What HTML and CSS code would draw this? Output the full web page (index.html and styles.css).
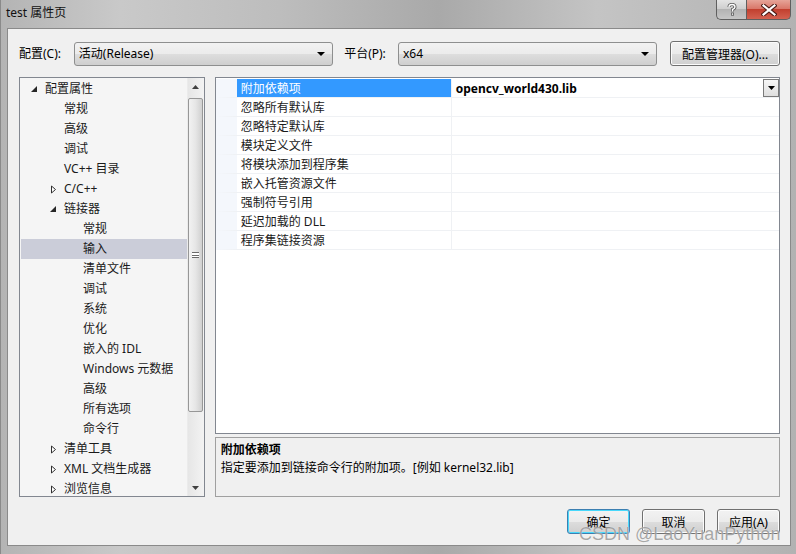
FILE: index.html
```html
<!DOCTYPE html>
<html lang="zh-CN">
<head>
    <meta charset="UTF-8">
    <title>test 属性页</title>
    <link rel="stylesheet" href="styles.css">
</head>
<body>
    <div class="window">
        <div class="titlebar">
            <span class="title">test 属性页</span>
            <div class="caption">
                <div class="cap help">
                    <svg width="10" height="13" viewBox="0 0 10 13">
                        <path d="M2 4 Q2 1.5 5 1.5 Q8 1.5 8 4 Q8 5.5 5.5 6.5 L5.5 8.5" fill="none" stroke="#555" stroke-width="3"/>
                        <path d="M2 4 Q2 1.5 5 1.5 Q8 1.5 8 4 Q8 5.5 5.5 6.5 L5.5 8.5" fill="none" stroke="#fff" stroke-width="1.4"/>
                        <rect x="4" y="9.6" width="3" height="3" fill="#555"/>
                        <rect x="4.8" y="10.4" width="1.4" height="1.4" fill="#fff"/>
                    </svg>
                </div>
                <div class="cap close">
                    <svg width="16" height="12" viewBox="0 0 16 12">
                        <path d="M2.5 1.5 L13.5 10.5 M13.5 1.5 L2.5 10.5" stroke="#4a1a14" stroke-width="4.2" stroke-linecap="square"/>
                        <path d="M2.5 1.5 L13.5 10.5 M13.5 1.5 L2.5 10.5" stroke="#fff" stroke-width="2.2" stroke-linecap="square"/>
                    </svg>
                </div>
            </div>
        </div>

        <div class="client">
            <div class="toolbar">
                <span class="label first">配置(C):</span>
                <div class="combo">活动(Release)<span class="combo-arrow"></span></div>
                <span class="label second">平台(P):</span>
                <div class="combo">x64<span class="combo-arrow"></span></div>
                <button class="btn manager">配置管理器(O)...</button>
            </div>

            <div class="main">
                <div class="tree">
                    <div class="tree-list">
                        <div class="node lv0"><span class="tog"><svg width="8" height="8" viewBox="0 0 8 8"><polygon points="7,1 7,7 1,7" fill="#262626"/></svg></span>配置属性</div>
                        <div class="node lv1"><span class="tog"></span>常规</div>
                        <div class="node lv1"><span class="tog"></span>高级</div>
                        <div class="node lv1"><span class="tog"></span>调试</div>
                        <div class="node lv1"><span class="tog"></span>VC++ 目录</div>
                        <div class="node lv1"><span class="tog"><svg width="8" height="9" viewBox="0 0 8 9"><polygon points="2.5,1 6.5,4.5 2.5,8" fill="#fff" stroke="#303030"/></svg></span>C/C++</div>
                        <div class="node lv1"><span class="tog"><svg width="8" height="8" viewBox="0 0 8 8"><polygon points="7,1 7,7 1,7" fill="#262626"/></svg></span>链接器</div>
                        <div class="node lv2"><span class="tog"></span>常规</div>
                        <div class="node lv2 selected"><span class="tog"></span>输入</div>
                        <div class="node lv2"><span class="tog"></span>清单文件</div>
                        <div class="node lv2"><span class="tog"></span>调试</div>
                        <div class="node lv2"><span class="tog"></span>系统</div>
                        <div class="node lv2"><span class="tog"></span>优化</div>
                        <div class="node lv2"><span class="tog"></span>嵌入的 IDL</div>
                        <div class="node lv2"><span class="tog"></span>Windows 元数据</div>
                        <div class="node lv2"><span class="tog"></span>高级</div>
                        <div class="node lv2"><span class="tog"></span>所有选项</div>
                        <div class="node lv2"><span class="tog"></span>命令行</div>
                        <div class="node lv1"><span class="tog"><svg width="8" height="9" viewBox="0 0 8 9"><polygon points="2.5,1 6.5,4.5 2.5,8" fill="#fff" stroke="#303030"/></svg></span>清单工具</div>
                        <div class="node lv1"><span class="tog"><svg width="8" height="9" viewBox="0 0 8 9"><polygon points="2.5,1 6.5,4.5 2.5,8" fill="#fff" stroke="#303030"/></svg></span>XML 文档生成器</div>
                        <div class="node lv1"><span class="tog"><svg width="8" height="9" viewBox="0 0 8 9"><polygon points="2.5,1 6.5,4.5 2.5,8" fill="#fff" stroke="#303030"/></svg></span>浏览信息</div>
                    </div>
                    <div class="scrollbar">
                        <div class="sb-arrow"><svg width="7" height="4" viewBox="0 0 7 4"><polygon points="3.5,0 7,4 0,4" fill="#404040"/></svg></div>
                        <div class="sb-track">
                            <div class="sb-thumb"><span class="grip"></span></div>
                        </div>
                        <div class="sb-arrow"><svg width="7" height="4" viewBox="0 0 7 4"><polygon points="0,0 7,0 3.5,4" fill="#404040"/></svg></div>
                    </div>
                </div>

                <div class="right">
                    <div class="grid">
                        <div class="prop selected"><span class="pname">附加依赖项</span><span class="pvalue bold">opencv_world430.lib<span class="drop"><svg width="7" height="4" viewBox="0 0 7 4"><polygon points="0,0 7,0 3.5,4" fill="#000"/></svg></span></span></div>
                        <div class="prop"><span class="pname">忽略所有默认库</span><span class="pvalue"></span></div>
                        <div class="prop"><span class="pname">忽略特定默认库</span><span class="pvalue"></span></div>
                        <div class="prop"><span class="pname">模块定义文件</span><span class="pvalue"></span></div>
                        <div class="prop"><span class="pname">将模块添加到程序集</span><span class="pvalue"></span></div>
                        <div class="prop"><span class="pname">嵌入托管资源文件</span><span class="pvalue"></span></div>
                        <div class="prop"><span class="pname">强制符号引用</span><span class="pvalue"></span></div>
                        <div class="prop"><span class="pname">延迟加载的 DLL</span><span class="pvalue"></span></div>
                        <div class="prop"><span class="pname">程序集链接资源</span><span class="pvalue"></span></div>
                    </div>
                    <div class="desc">
                        <div class="desc-title">附加依赖项</div>
                        <div class="desc-text">指定要添加到链接命令行的附加项。[例如 kernel32.lib]</div>
                    </div>
                </div>
            </div>

            <div class="footer">
                <button class="btn default">确定</button>
                <button class="btn">取消</button>
                <button class="btn">应用(A)</button>
            </div>
        </div>

        <div class="watermark">CSDN @LaoYuanPython</div>
    </div>
</body>
</html>
```

FILE: styles.css
```css
* {
    margin: 0;
    padding: 0;
    box-sizing: border-box;
}

body {
    font-family: 'Noto Sans', 'Noto Sans CJK SC', sans-serif;
    font-size: 12px;
    color: #000;
    background: #bcbcbc;
}

.window {
    position: relative;
    width: 796px;
    height: 554px;
    padding: 0 5px 8px 6px;
    background: linear-gradient(90deg, #b4b4b4 0%, #c9c9c9 15%, #bdbdbd 35%, #a9a9a9 55%, #c4c4c4 75%, #b2b2b2 100%);
    border-left: 1px solid #8a8a8a;
    display: flex;
    flex-direction: column;
}

/* 标题栏 */
.titlebar {
    height: 28px;
    display: flex;
    justify-content: space-between;
    align-items: flex-start;
    margin-left: -1px;
}

.title {
    margin-top: 5px;
    line-height: 15px;
    color: #111;
}

.caption {
    display: flex;
}

.cap {
    height: 20px;
    display: flex;
    align-items: center;
    justify-content: center;
    border: 1px solid #5f5f5f;
    border-top: none;
}

.help {
    width: 30px;
    border-radius: 0 0 0 5px;
    border-right: none;
    background: linear-gradient(#e4e4e4 0%, #cfcfcf 45%, #b3b3b3 50%, #c6c6c6 100%);
}

.close {
    width: 45px;
    border-radius: 0 0 5px 0;
    background: linear-gradient(#e6a498 0%, #d9786a 45%, #c2402f 50%, #d36150 100%);
}

/* 客户区 */
.client {
    flex: 1;
    background: #f0f0f0;
    border: 1px solid #8a8a8a;
    padding: 12px 10px 11px 11px;
    display: flex;
    flex-direction: column;
}

.toolbar {
    display: flex;
    align-items: center;
    height: 25px;
}

.label {
    line-height: 16px;
}

.label.first {
    width: 55px;
}

.label.second {
    width: 54px;
    margin-left: 11px;
}

.combo {
    position: relative;
    width: 260px;
    height: 24px;
    padding: 0 0 0 4px;
    line-height: 22px;
    border: 1px solid #8e8f8f;
    border-radius: 3px;
    background: linear-gradient(#f2f2f2 0%, #ebebeb 50%, #dddddd 51%, #cfcfcf 100%);
}

.combo-arrow {
    position: absolute;
    right: 7px;
    top: 9px;
    width: 0;
    height: 0;
    border-left: 4px solid transparent;
    border-right: 4px solid transparent;
    border-top: 4px solid #000;
}

.btn {
    font-family: inherit;
    font-size: 12px;
    color: #000;
    height: 25px;
    border: 1px solid #707070;
    border-radius: 3px;
    background: linear-gradient(#f2f2f2 0%, #ebebeb 50%, #dddddd 51%, #cfcfcf 100%);
    box-shadow: inset 0 0 0 1px #fcfcfc;
}

.btn.manager {
    width: 110px;
    margin-left: 13px;
}

/* 主体区 */
.main {
    margin-top: 11px;
    height: 420px;
    display: flex;
    gap: 10px;
}

.tree {
    width: 186px;
    border: 1px solid #828790;
    background: #f5f5f5;
    display: flex;
}

.tree-list {
    flex: 1;
    padding: 1px 0 0 1px;
    overflow: hidden;
}

.node {
    height: 20px;
    line-height: 20px;
    display: flex;
    align-items: center;
    white-space: nowrap;
    color: #1a1a1a;
}

.node.lv0 { padding-left: 8px; }
.node.lv1 { padding-left: 27px; }
.node.lv2 { padding-left: 46px; }

.node.selected {
    background: #cbcdd9;
}

.tog {
    width: 16px;
    height: 20px;
    display: flex;
    align-items: center;
    padding-left: 1px;
}

.scrollbar {
    width: 17px;
    display: flex;
    flex-direction: column;
    background: linear-gradient(90deg, #e6e6e6, #f3f3f3);
    border-left: 1px solid #ebebeb;
}

.sb-arrow {
    height: 17px;
    display: flex;
    align-items: center;
    justify-content: center;
}

.sb-track {
    flex: 1;
    padding: 3px 1px 0 0;
}

.sb-thumb {
    height: 314px;
    border: 1px solid #979797;
    border-radius: 2px;
    background: linear-gradient(90deg, #f2f2f2 0%, #e6e6e6 50%, #d0d0d0 100%);
    display: flex;
    align-items: center;
    justify-content: center;
}

.grip {
    width: 7px;
    height: 6px;
    border-top: 1px solid #6a6a6a;
    border-bottom: 1px solid #6a6a6a;
    background: linear-gradient(#fff 0 2px, #6a6a6a 2px 3px, #fff 3px);
}

.right {
    width: 566px;
    display: flex;
    flex-direction: column;
    gap: 3px;
}

.grid {
    height: 357px;
    border: 1px solid #828790;
    background: #fff;
    padding-top: 1px;
}

.prop {
    height: 19px;
    display: flex;
    border-left: 21px solid #f4f7fc;
    border-bottom: 1px solid #eff1f4;
}

.pname {
    width: 214px;
    padding: 1px 0 0 4px;
    line-height: 17px;
    color: #1a1a1a;
}

.prop.selected .pname {
    background: #3399ff;
    color: #fff;
}

.pvalue {
    position: relative;
    flex: 1;
    padding: 1px 0 0 4px;
    line-height: 17px;
    border-left: 1px solid #eff1f4;
}

.pvalue.bold {
    font-weight: bold;
}

.drop {
    position: absolute;
    right: 0;
    top: 0;
    width: 16px;
    height: 18px;
    border: 1px solid #7a7a7a;
    background: linear-gradient(#f6f6f6, #dedede);
    display: flex;
    align-items: center;
    justify-content: center;
}

.desc {
    flex: 1;
    border: 1px solid #a0a0a0;
    padding: 3px 5px;
    background: #f0f0f0;
    line-height: 18px;
}

.desc-title {
    font-weight: bold;
}

/* 底部按钮 */
.footer {
    margin-top: 12px;
    display: flex;
    justify-content: flex-end;
    gap: 12px;
}

.footer .btn {
    width: 63px;
}

.btn.default {
    border-color: #3c7fb1;
    box-shadow: inset 0 0 0 1px #48d8fb;
}

.watermark {
    position: absolute;
    left: 578px;
    top: 524px;
    font-family: 'Liberation Sans', sans-serif;
    font-size: 18px;
    line-height: 20px;
    color: rgba(110, 110, 110, 0.6);
    text-shadow: 0 0 1px rgba(255, 255, 255, 0.9);
    white-space: nowrap;
}
```
